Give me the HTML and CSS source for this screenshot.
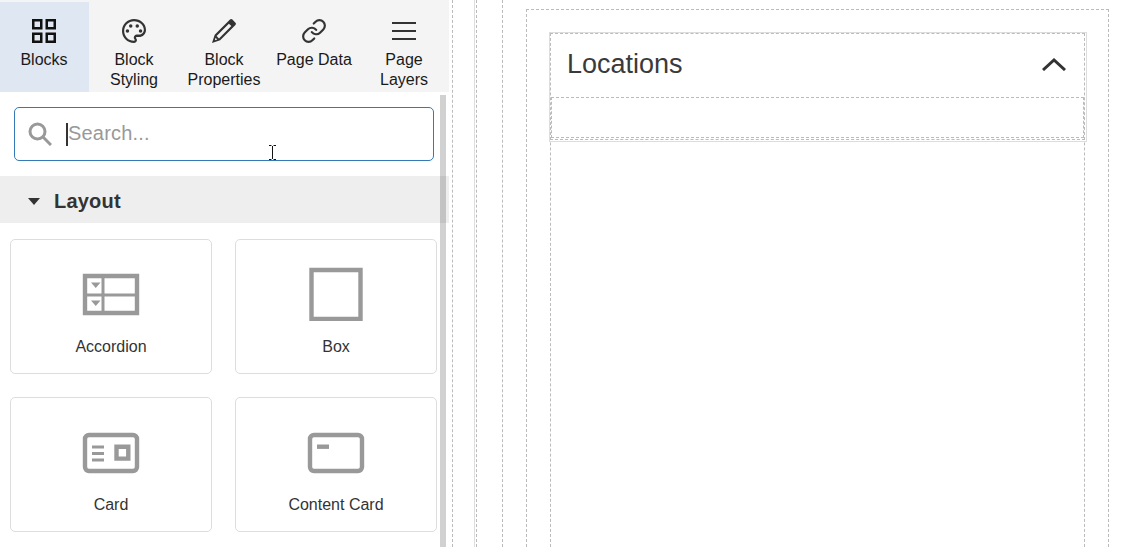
FILE: index.html
```html
<!DOCTYPE html>
<html lang="en">
<head>
    <meta charset="UTF-8">
    <meta name="viewport" content="width=device-width, initial-scale=1.0">
    <title>Page Builder</title>
    <link rel="stylesheet" href="styles.css">
</head>
<body>
    <div class="sidebar">
        <div class="tabs">
            <div class="tab active">
                <svg class="tab-icon" viewBox="0 0 24 24"><path d="M0 0h10.500v10.500H0zM2.500 2.500v5.500h5.500V2.500zM13.500 0H24v10.500H13.500zM16 2.500v5.500h5.500V2.500zM0 13.500h10.500V24H0zM2.500 16v5.500h5.500V16zM13.500 13.500H24V24H13.500zM16 16v5.500h5.500V16z" fill-rule="evenodd"/></svg>
                <span>Blocks</span>
            </div>
            <div class="tab">
                <svg class="tab-icon" viewBox="1 1 22 22"><path d="M12 23C6 23 1 18 1 12S6 1 12 1s11 4.400 11 10c0 3.600-2.900 6.500-6.500 6.500h-2c-.4 0-.7.300-.7.700 0 .2.100.3.200.4.500.5.700 1.100.700 1.700 0 1.500-1.200 2.700-2.700 2.700zm0-20c-5 0-9 4-9 9s4 9 9 9c.4 0 .7-.3.7-.7 0-.2-.1-.3-.2-.5-.4-.5-.7-1.100-.7-1.700 0-1.500 1.200-2.800 2.700-2.800h2c2.500 0 4.500-2 4.500-4.500C21 6.500 17 3 12 3z"/><circle cx="6" cy="12" r="1.600"/><circle cx="9" cy="7.500" r="1.600"/><circle cx="15" cy="7.500" r="1.600"/><circle cx="18" cy="12" r="1.600"/></svg>
                <span>Block<br>Styling</span>
            </div>
            <div class="tab">
                <svg class="tab-icon" viewBox="1 1 22 22"><path d="M18.600 1c-.4 0-.8.200-1.100.5L3.500 15.500 1 23l7.500-2.500 14-14c.6-.6.600-1.500 0-2.100l-2.800-2.900c-.3-.3-.7-.5-1.100-.5zM16.500 5.300l2.200 2.200L7.400 18.800l-2.200-2.200zM4.300 18.200l1.500 1.500-2.200.7z" fill-rule="evenodd"/></svg>
                <span>Block<br>Properties</span>
            </div>
            <div class="tab">
                <svg class="tab-icon" viewBox="1 1 22 22"><g class="link-rings"><path d="M10 13a5 5 0 0 0 7.540.540l3-3a5 5 0 0 0-7.070-7.070l-1.720 1.710"/><path d="M14 11a5 5 0 0 0-7.540-.54l-3 3a5 5 0 0 0 7.070 7.070l1.710-1.710"/></g></svg>
                <span>Page Data</span>
            </div>
            <div class="tab">
                <svg class="tab-icon" viewBox="0 0 24 24"><path d="M0 3h24v2H0zM0 11h24v2H0zM0 19h24v2H0z"/></svg>
                <span>Page<br>Layers</span>
            </div>
        </div>

        <div class="panel">
            <div class="panel-content">
                <div class="search-box">
                    <svg class="search-icon" viewBox="0 0 24 24"><circle cx="9.500" cy="9.500" r="7.500"/><path d="M15 15l8 8"/></svg>
                    <span class="caret"></span>
                    <span class="placeholder">Search...</span>
                </div>

                <div class="section-head">
                    <span class="section-arrow"></span>
                    <span>Layout</span>
                </div>

                <div class="block-grid">
                    <div class="block-card">
                        <svg class="block-icon" viewBox="0 0 72 54"><path class="thick" d="M10 9h52v37H10z"/><path class="thin" d="M10 28h52M28 9v37"/><path class="fill" d="M16 15.500h9.500l-4.750 5.500zM16 33.500h9.500l-4.750 5.500z"/></svg>
                        <span>Accordion</span>
                    </div>
                    <div class="block-card">
                        <svg class="block-icon" viewBox="0 0 72 54"><path class="thick" d="M11.500 3h49v49h-49z"/></svg>
                        <span>Box</span>
                    </div>
                    <div class="block-card">
                        <svg class="block-icon" viewBox="0 0 72 54"><rect class="thick" x="10" y="10" width="52" height="36" rx="4"/><path class="thin" d="M17 22h12M17 28.500h12M17 35h12"/><path class="thick" d="M41.500 21.800h11.800v11.800H41.500z"/></svg>
                        <span>Card</span>
                    </div>
                    <div class="block-card">
                        <svg class="block-icon" viewBox="0 0 72 54"><rect class="thick" x="10" y="10" width="52" height="36" rx="4"/><path class="thick" d="M17 21.700h12"/></svg>
                        <span>Content Card</span>
                    </div>
                </div>
            </div>
            <div class="scrollbar"></div>
        </div>
    </div>

    <div class="canvas">
        <div class="frame-outer">
            <div class="frame-rule">
                <div class="frame-page">
                    <div class="frame-section">
                        <div class="frame-column">
                            <div class="column">
                                <div class="accordion">
                                    <div class="accordion-inner">
                                        <div class="accordion-head">
                                            <span>Locations</span>
                                            <svg class="chevron" viewBox="0 0 24 13"><path d="M1 12L12 2l11 10"/></svg>
                                        </div>
                                        <div class="accordion-body"></div>
                                    </div>
                                </div>
                            </div>
                        </div>
                    </div>
                </div>
            </div>
        </div>
    </div>

    <!-- mouse pointer caught in the shot -->
    <svg class="ibeam" viewBox="0 0 7 15"><path d="M0 .5h2.500M4.500 .5H7M3.500 1v13M0 14.500h2.500M4.500 14.500H7"/></svg>
</body>
</html>
```

FILE: styles.css
```css
* {
    box-sizing: border-box;
}
html, body {
    height: 100%;
}
body {
    margin: 0;
    display: flex;
    overflow: hidden;
    background-color: white;
    font-family: "Liberation Sans", Arial, sans-serif;
    color: #333;
    position: relative;
}
.sidebar {
    width: 449px;
    flex-shrink: 0;
    display: flex;
    flex-direction: column;
    overflow: hidden;
}
.tabs {
    display: flex;
    height: 92px;
    margin-left: -1px;
    padding-top: 2px;
    background-color: #f4f4f4;
}
.tab {
    width: 90px;
    flex-shrink: 0;
    display: flex;
    flex-direction: column;
    align-items: center;
    padding-top: 17px;
    font-size: 16px;
    line-height: 20px;
    text-align: center;
    color: #1a1a1a;
}
.tab.active {
    background-color: #dfe7f2;
}
.tab span {
    display: block;
    margin-top: 7px;
}
.tab-icon {
    width: 24px;
    height: 24px;
    fill: #333;
}
.tab.active .tab-icon {
    fill: #111;
}
.link-rings {
    fill: none;
    stroke: #333;
    stroke-width: 2;
    stroke-linecap: round;
}
.panel {
    flex: 1;
    min-height: 0;
    position: relative;
}
.panel-content {
    width: 449px;
}
.scrollbar {
    position: absolute;
    left: 440px;
    top: 3px;
    bottom: 0;
    width: 6px;
    background-color: rgba(0, 0, 0, 0.18);
}
.search-box {
    display: flex;
    align-items: center;
    height: 54px;
    margin: 15px 15px 15px 14px;
    padding-left: 13px;
    border: 1px solid #337ab7;
    border-radius: 5px;
    background-color: white;
}
.search-icon {
    width: 24px;
    height: 24px;
    fill: none;
    stroke: #999;
    stroke-width: 3;
}
.caret {
    width: 2px;
    height: 23px;
    margin-left: 14px;
    background-color: #333;
}
.placeholder {
    padding-bottom: 2px;
    font-size: 20px;
    letter-spacing: 0.2px;
    color: #999;
}
.section-head {
    display: flex;
    align-items: center;
    height: 47px;
    padding: 3px 0 0 28px;
    background-color: #eee;
    font-size: 20px;
    font-weight: bold;
    letter-spacing: 0.2px;
    color: #333;
}
.section-arrow {
    width: 0;
    height: 0;
    margin-right: 14px;
    border-left: 6.500px solid transparent;
    border-right: 6.500px solid transparent;
    border-top: 7px solid #333;
}
.block-grid {
    display: grid;
    grid-template-columns: 202px 202px;
    grid-auto-rows: 135px;
    column-gap: 23px;
    row-gap: 23px;
    padding: 16px 0 0 10px;
}
.block-card {
    display: flex;
    flex-direction: column;
    align-items: center;
    padding-top: 27px;
    border: 1px solid #ddd;
    border-radius: 5px;
    font-size: 16px;
    color: #333;
}
.block-card span {
    margin-top: 16px;
    line-height: 20px;
}
.block-icon {
    width: 72px;
    height: 54px;
}
.thick {
    fill: none;
    stroke: #999;
    stroke-width: 4.400;
}
.thin {
    fill: none;
    stroke: #999;
    stroke-width: 3;
}
.fill {
    fill: #999;
}
.canvas {
    flex: 1;
    padding-left: 3px;
}
.frame-outer {
    height: 100%;
    padding-left: 21px;
    border-left: 1px dashed #bbb;
}
.frame-rule {
    height: 100%;
    padding-left: 1px;
    border-left: 1px solid #ddd;
}
.frame-page {
    height: 100%;
    padding-left: 25px;
    border-left: 1px dashed #bbb;
}
.frame-section {
    height: 100%;
    padding-left: 23px;
    padding-top: 9px;
    border-left: 1px dashed #bbb;
}
.frame-column {
    width: 583px;
    height: 100%;
    padding: 22px 23px 0 23px;
    border-top: 1px dashed #bbb;
    border-left: 1px dashed #bbb;
    border-right: 1px dashed #bbb;
}
.column {
    height: 100%;
    border-left: 1px dashed #bbb;
    border-right: 1px dashed #bbb;
}
.accordion {
    height: 110px;
    margin: 0 -3px 0 -2px;
    border: 1px solid #ddd;
    background-color: white;
}
.accordion-inner {
    margin-right: 1px;
    border: 1px dashed #bbb;
}
.accordion-head {
    display: flex;
    align-items: center;
    justify-content: space-between;
    height: 63px;
    padding: 0 18px 2px 16px;
    font-size: 27px;
    color: #3a3a3a;
}
.accordion-body {
    height: 41px;
    margin-bottom: 1px;
    border: 1px dashed #bbb;
}
.chevron {
    width: 24px;
    height: 13px;
    fill: none;
    stroke: #333;
    stroke-width: 3;
}
.ibeam {
    position: absolute;
    left: 269px;
    top: 145px;
    width: 7px;
    height: 15px;
    fill: none;
    stroke: #111;
    stroke-width: 1;
}
```
